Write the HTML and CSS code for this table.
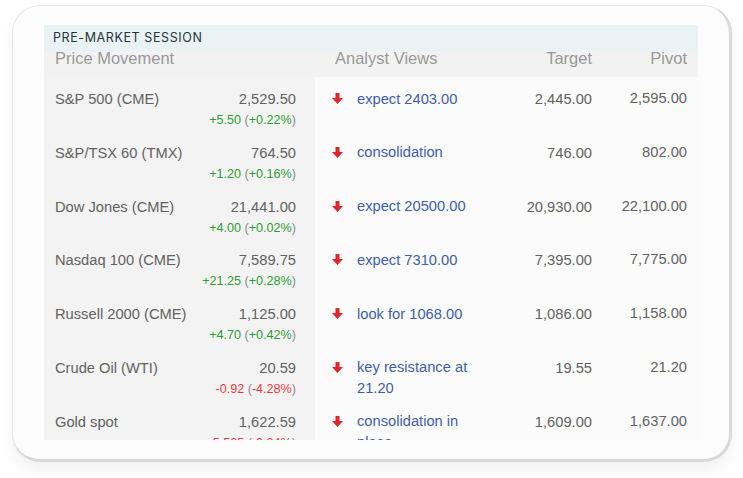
FILE: index.html
```html
<!DOCTYPE html>
<html>
<head>
<meta charset="utf-8">
<link rel="stylesheet" href="styles.css">
</head>
<body>
<div class="card">
  <div class="panel">
    <div class="title">PRE-MARKET SESSION</div>
    <div class="thead">
      <div class="h-left">Price Movement</div>
      <div class="h-views">Analyst Views</div>
      <div class="h-num">Target</div>
      <div class="h-num">Pivot</div>
    </div>

    <div class="row">
      <div class="left"><div class="line"><span>S&amp;P 500 (CME)</span><span>2,529.50</span></div><div class="chg up">+5.50 <span class="par">(</span>+0.22%<span class="par">)</span></div></div>
      <div class="arrow"><svg viewBox="0 0 11 11" width="11" height="11"><path d="M3.5 0h4v5h3.5l-5.5 6-5.5-6h3.5z"/></svg></div>
      <div class="view">expect 2403.00</div>
      <div class="num">2,445.00</div>
      <div class="num pv">2,595.00</div>
    </div>
    <div class="row">
      <div class="left"><div class="line"><span>S&amp;P/TSX 60 (TMX)</span><span>764.50</span></div><div class="chg up">+1.20 <span class="par">(</span>+0.16%<span class="par">)</span></div></div>
      <div class="arrow"><svg viewBox="0 0 11 11" width="11" height="11"><path d="M3.5 0h4v5h3.5l-5.5 6-5.5-6h3.5z"/></svg></div>
      <div class="view">consolidation</div>
      <div class="num">746.00</div>
      <div class="num pv">802.00</div>
    </div>
    <div class="row">
      <div class="left"><div class="line"><span>Dow Jones (CME)</span><span>21,441.00</span></div><div class="chg up">+4.00 <span class="par">(</span>+0.02%<span class="par">)</span></div></div>
      <div class="arrow"><svg viewBox="0 0 11 11" width="11" height="11"><path d="M3.5 0h4v5h3.5l-5.5 6-5.5-6h3.5z"/></svg></div>
      <div class="view">expect 20500.00</div>
      <div class="num">20,930.00</div>
      <div class="num pv">22,100.00</div>
    </div>
    <div class="row">
      <div class="left"><div class="line"><span>Nasdaq 100 (CME)</span><span>7,589.75</span></div><div class="chg up">+21.25 <span class="par">(</span>+0.28%<span class="par">)</span></div></div>
      <div class="arrow"><svg viewBox="0 0 11 11" width="11" height="11"><path d="M3.5 0h4v5h3.5l-5.5 6-5.5-6h3.5z"/></svg></div>
      <div class="view">expect 7310.00</div>
      <div class="num">7,395.00</div>
      <div class="num pv">7,775.00</div>
    </div>
    <div class="row">
      <div class="left"><div class="line"><span>Russell 2000 (CME)</span><span>1,125.00</span></div><div class="chg up">+4.70 <span class="par">(</span>+0.42%<span class="par">)</span></div></div>
      <div class="arrow"><svg viewBox="0 0 11 11" width="11" height="11"><path d="M3.5 0h4v5h3.5l-5.5 6-5.5-6h3.5z"/></svg></div>
      <div class="view">look for 1068.00</div>
      <div class="num">1,086.00</div>
      <div class="num pv">1,158.00</div>
    </div>
    <div class="row">
      <div class="left"><div class="line"><span>Crude Oil (WTI)</span><span>20.59</span></div><div class="chg down">-0.92 <span class="par">(</span>-4.28%<span class="par">)</span></div></div>
      <div class="arrow"><svg viewBox="0 0 11 11" width="11" height="11"><path d="M3.5 0h4v5h3.5l-5.5 6-5.5-6h3.5z"/></svg></div>
      <div class="view">key resistance at 21.20</div>
      <div class="num">19.55</div>
      <div class="num pv">21.20</div>
    </div>
    <div class="row">
      <div class="left"><div class="line"><span>Gold spot</span><span>1,622.59</span></div><div class="chg down">-5.505 <span class="par">(</span>-0.34%<span class="par">)</span></div></div>
      <div class="arrow"><svg viewBox="0 0 11 11" width="11" height="11"><path d="M3.5 0h4v5h3.5l-5.5 6-5.5-6h3.5z"/></svg></div>
      <div class="view">consolidation in place</div>
      <div class="num">1,609.00</div>
      <div class="num pv">1,637.00</div>
    </div>
  </div>
</div>
</body>
</html>
```

FILE: styles.css
```css
html, body {
  margin: 0;
  padding: 0;
  background: #ffffff;
}
body {
  font-family: "Liberation Sans", Arial, sans-serif;
  width: 743px;
  height: 478px;
  overflow: hidden;
}
.card {
  box-sizing: border-box;
  margin: 5px 0 0 12px;
  width: 720px;
  height: 457px;
  background: #fcfcfc;
  border: 1px solid #e7e7e7;
  border-right: 3px solid #d9d9d9;
  border-bottom: 3px solid #d9d9d9;
  border-radius: 28px;
  padding: 19px 31px 0 31px;
  box-shadow: 0 8px 14px rgba(0, 0, 0, 0.06);
}
.panel {
  height: 415px;
  overflow: hidden;
  background: #fbfbfb;
}
.title {
  height: 26px;
  line-height: 26px;
  background: #e9f2f4;
  padding-left: 9px;
  font-family: Inter, "Open Sans", sans-serif;
  font-size: 12.5px;
  letter-spacing: 0.6px;
  color: #27343a;
}
.thead, .row {
  display: grid;
  grid-template-columns: 271px 42px 125px 110px 95px 11px;
}
.thead {
  height: 26px;
  background: #f2f2f2;
  font-size: 16.5px;
  line-height: 14px;
  color: #999999;
}
.h-left { padding-left: 11px; }
.h-views { grid-column: 2 / 4; padding-left: 20px; }
.h-num { text-align: right; }
.row {
  height: 53.8px;
  font-size: 14.7px;
  color: #626262;
}
.left {
  background: #f3f3f3;
  padding: 13px 19px 0 11px;
}
.line {
  display: flex;
  justify-content: space-between;
  line-height: 18px;
}
.chg {
  margin-top: 4px;
  line-height: 16px;
  font-size: 12.6px;
  text-align: right;
}
.chg.up { color: #2e9c34; }
.chg.down { color: #ec3b3f; }
.par { color: #8a8a8a; }
.arrow {
  padding: 16px 0 0 17px;
}
.arrow svg {
  display: block;
  fill: #e0262a;
}
.view {
  padding-top: 11.5px;
  line-height: 21px;
  color: #3f5ea6;
}
.num {
  padding-top: 13px;
  line-height: 18px;
  text-align: right;
}
.pv { padding-top: 12px; }
```
